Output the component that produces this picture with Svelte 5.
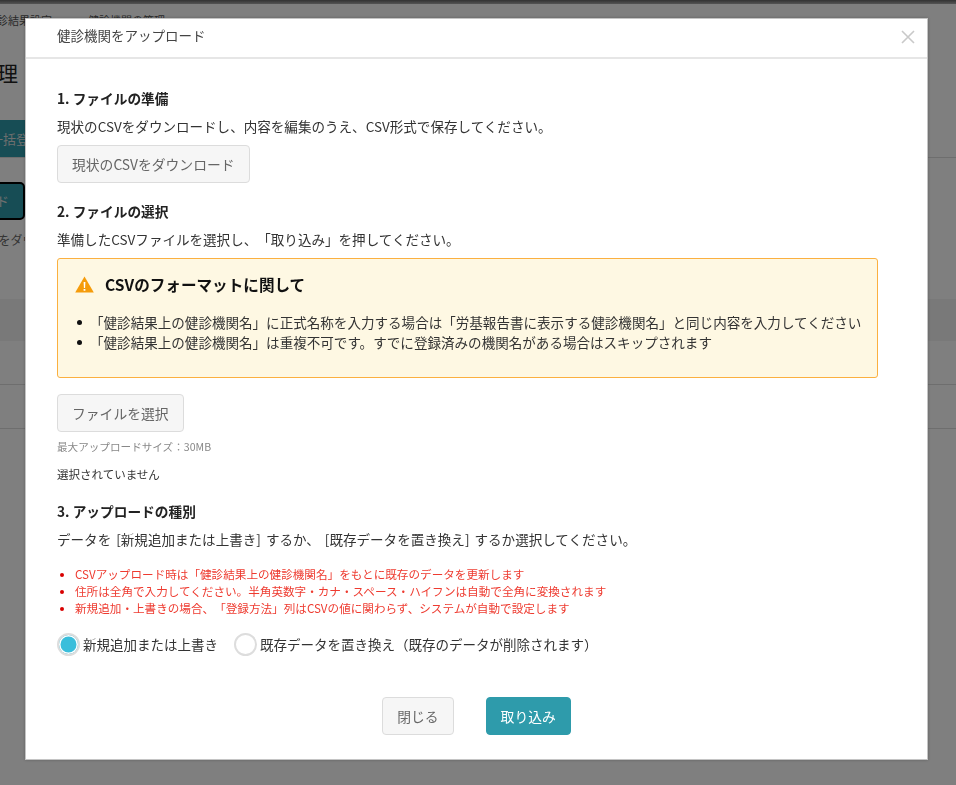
<script lang="ts">
  let mode = $state('merge')
</script>

<div class="page">
  <div class="topbar"></div>
  <div class="crumbs"><span>健診結果設定</span><span>健診機関の管理</span></div>
  <h1>健診機関の管理</h1>
  <div class="tabs"><div class="tab">一括登録</div></div>
  <div class="upload">アップロード</div>
  <p class="hint">CSVをダウンロード</p>
  <div class="band"></div>
  <div class="row"></div>
  <div class="row"></div>
</div>

<div class="overlay">
  <div class="modal">
    <header>
      <span>健診機関をアップロード</span>
      <svg class="close" width="14" height="14" viewBox="0 0 14 14" aria-hidden="true">
        <path d="M1 1l12 12M13 1L1 13" fill="none" stroke="#c9c9c9" stroke-width="1.6"/>
      </svg>
    </header>
    <div class="body">
      <h2>1. ファイルの準備</h2>
      <p>現状のCSVをダウンロードし、内容を編集のうえ、CSV形式で保存してください。</p>
      <button class="btn dl">現状のCSVをダウンロード</button>

      <h2 class="second">2. ファイルの選択</h2>
      <p>準備したCSVファイルを選択し、「取り込み」を押してください。</p>
      <div class="notice">
        <div class="notice-title">
          <svg width="19" height="17" viewBox="0 0 19 17" aria-hidden="true">
            <path d="M9.5 0.5L18.8 16.6H0.2z" fill="#f59c0b"/>
            <path d="M8.6 6h1.8l-.3 6H8.9zM8.6 13h1.8v1.8H8.6z" fill="#fff"/>
          </svg>
          <strong>CSVのフォーマットに関して</strong>
        </div>
        <ul>
          <li>「健診結果上の健診機関名」に正式名称を入力する場合は「労基報告書に表示する健診機関名」と同じ内容を入力してください</li>
          <li>「健診結果上の健診機関名」は重複不可です。すでに登録済みの機関名がある場合はスキップされます</li>
        </ul>
      </div>
      <button class="btn file">ファイルを選択</button>
      <div class="limit">最大アップロードサイズ：30MB</div>
      <div class="none">選択されていません</div>

      <h2 class="third">3. アップロードの種別</h2>
      <p class="spaced">データを [新規追加または上書き] するか、 [既存データを置き換え] するか選択してください。</p>
      <ul class="warn">
        <li>CSVアップロード時は「健診結果上の健診機関名」をもとに既存のデータを更新します</li>
        <li>住所は全角で入力してください。半角英数字・カナ・スペース・ハイフンは自動で全角に変換されます</li>
        <li>新規追加・上書きの場合、「登録方法」列はCSVの値に関わらず、システムが自動で設定します</li>
      </ul>
      <div class="radios">
        <label>
          <input type="radio" bind:group={mode} value="merge" />
          <span class="dot"></span>
          新規追加または上書き
        </label>
        <label>
          <input type="radio" bind:group={mode} value="replace" />
          <span class="dot"></span>
          既存データを置き換え（既存のデータが削除されます）
        </label>
      </div>
      <div class="actions">
        <button class="btn close-btn">閉じる</button>
        <button class="btn primary">取り込み</button>
      </div>
    </div>
  </div>
</div>

<style>
  :global(body) {
    margin: 0;
    font-family: "Noto Sans CJK JP", "Noto Sans", sans-serif;
    color: #333;
    background: #fff;
    text-spacing-trim: space-all;
  }

  .page {
    height: 785px;
    overflow: hidden;
    background: #fff;
  }

  .topbar { height: 4px; background: linear-gradient(#666, #aaa); }

  .crumbs {
    display: flex;
    gap: 36px;
    margin: 8px 0 0 -14px;
    font-size: 11px;
    line-height: 16px;
    color: #555;
  }

  h1 {
    margin: 28px 0 0 -129px;
    font-size: 21px;
    line-height: 32px;
    font-weight: 400;
    color: #222;
  }

  .tabs {
    height: 37px;
    margin-top: 32px;
    border-bottom: 1px solid #ddd;
  }

  .tab {
    width: 70px;
    height: 37px;
    margin-left: -10px;
    background: #2e9bab;
    color: #ddd;
    font-size: 13px;
    line-height: 37px;
    white-space: nowrap;
  }

  .upload {
    box-sizing: border-box;
    width: 110px;
    height: 38px;
    margin: 24px 0 0 -85px;
    padding-right: 14px;
    border: 2px solid #000;
    border-radius: 5px;
    background: #2e9bab;
    color: #ddd;
    font-size: 13px;
    line-height: 34px;
    text-align: right;
    white-space: nowrap;
  }

  .hint {
    margin: 12px 0 0 -23px;
    font-size: 12px;
    line-height: 16px;
    color: #666;
    white-space: nowrap;
  }

  .band { height: 42px; margin-top: 51px; background: #f3f3f3; }
  .row { height: 43px; border-bottom: 1px solid #ddd; }

  .overlay {
    position: fixed;
    inset: 0;
    background: rgba(0, 0, 0, 0.5);
    display: flex;
    padding-left: 25px;
    align-items: flex-start;
  }

  .modal {
    width: 903px;
    height: 742px;
    margin-top: 18px;
    box-sizing: border-box;
    background: #fff;
    border: 1px solid #c4c4c4;
    box-shadow: 0 0 3px rgba(0, 0, 0, 0.25);
  }

  header {
    height: 40px;
    box-sizing: border-box;
    border-bottom: 2px solid #e6e6e6;
    padding: 0 12px 7px 31px;
    display: flex;
    align-items: center;
    justify-content: space-between;
    font-size: 13.5px;
    color: #444;
  }

  .close { margin-top: 5px; }

  .body { padding: 29px 31px 0; }

  h2 {
    margin: 0;
    font-size: 13.7px;
    line-height: 20px;
    font-weight: 700;
    color: #222;
  }

  h2.second { margin-top: 18px; }
  h2.third { margin-top: 18px; }

  p {
    margin: 8px 0 0;
    font-size: 13.55px;
    line-height: 20px;
    color: #333;
  }

  p.spaced { word-spacing: 2px; }

  .btn {
    display: block;
    box-sizing: border-box;
    height: 38px;
    padding: 0 14px;
    background: #f6f6f6;
    border: 1.5px solid #dcdcdc;
    border-radius: 4px;
    font: inherit;
    font-size: 13.8px;
    color: #666;
  }

  .dl { margin-top: 9px; }

  .notice {
    box-sizing: border-box;
    width: 821px;
    height: 120px;
    margin-top: 9px;
    padding: 15px 17px;
    background: #fef8e3;
    border: 1.5px solid #fbb040;
    border-radius: 3px;
  }

  .notice-title {
    display: flex;
    align-items: center;
    gap: 11px;
    font-size: 15.6px;
    line-height: 20px;
    color: #111;
  }

  ul { margin: 0; padding: 0; list-style: none; }

  .notice ul { margin-top: 18px; }

  .notice li {
    position: relative;
    padding-left: 15px;
    font-size: 13.55px;
    line-height: 20px;
    white-space: nowrap;
  }

  .notice li::before, .warn li::before {
    content: '';
    position: absolute;
    border-radius: 50%;
    background: currentColor;
  }

  .notice li::before { left: 2px; top: 8px; width: 5px; height: 5px; color: #111; }

  .file { margin-top: 16px; }

  .limit {
    margin-top: 7px;
    font-size: 10.6px;
    line-height: 16px;
    color: #888;
  }

  .none {
    margin-top: 10px;
    font-size: 11.5px;
    line-height: 18px;
    color: #333;
  }

  .warn { margin-top: 17px; padding-left: 18px; }

  .warn li {
    position: relative;
    font-size: 11.6px;
    line-height: 17px;
    color: #ee3b30;
  }

  .warn li::before { left: -15px; top: 7px; width: 4px; height: 4px; color: #d80000; }

  .radios {
    display: flex;
    gap: 16px;
    margin-top: 15px;
    font-size: 13.5px;
    line-height: 24px;
  }

  label { display: flex; align-items: center; gap: 3px; }
  label input { position: absolute; opacity: 0; width: 0; height: 0; }

  .dot {
    box-sizing: border-box;
    width: 23px;
    height: 23px;
    border: 2px solid #ddd;
    border-radius: 50%;
    background: #fff;
  }

  input:checked + .dot {
    background: #3abedb;
    box-shadow: inset 0 0 0 1.5px #fff;
  }

  .actions {
    display: flex;
    justify-content: center;
    gap: 32px;
    margin-top: 41px;
  }

  .primary {
    background: #2e9bab;
    border-color: #2e9bab;
    color: #fff;
  }
</style>
